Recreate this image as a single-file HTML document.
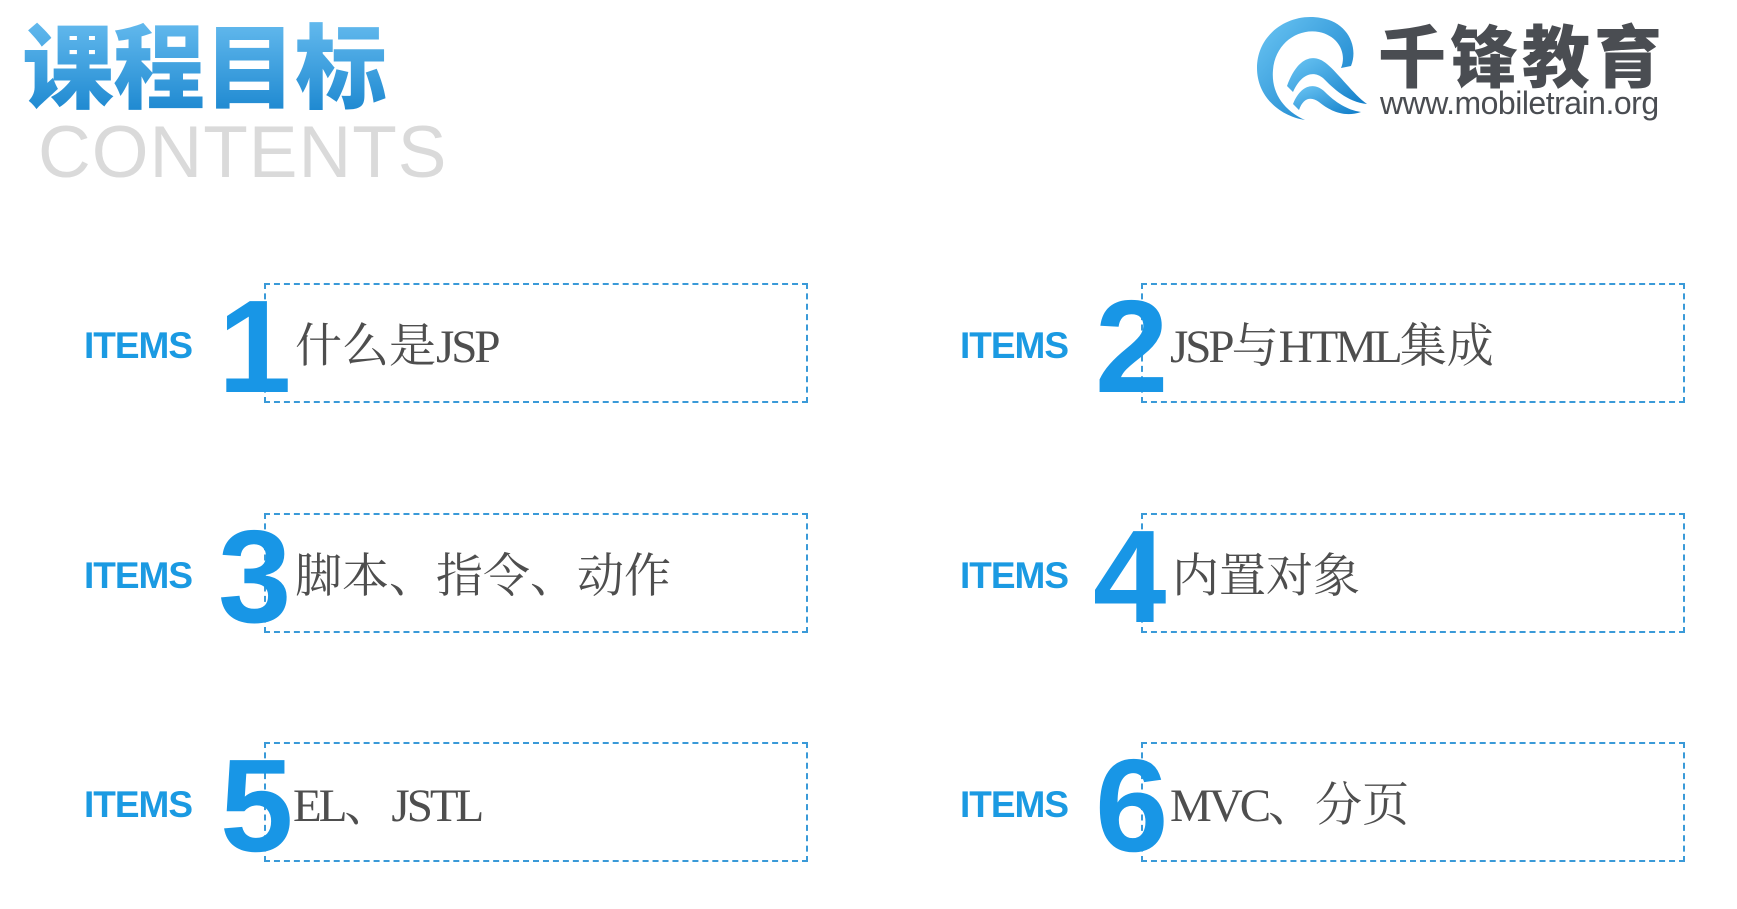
<!DOCTYPE html>
<html><head><meta charset="utf-8"><style>
body{margin:0;width:1737px;height:909px;background:#fff;position:relative;overflow:hidden;font-family:"Liberation Sans","Noto Sans CJK SC",sans-serif}
.a{position:absolute;white-space:nowrap}
.title{left:22px;top:7px;font-size:92px;font-weight:900;line-height:110px;letter-spacing:-1px;background:linear-gradient(#6ec1f2,#1a86cf);-webkit-background-clip:text;color:transparent;font-family:"Noto Sans CJK SC",sans-serif}
.cont{left:38px;top:116px;font-size:73px;color:#dadada;line-height:73px;letter-spacing:1px}
.box{position:absolute;border:2px dashed #3a9ad8;width:540px;height:116px}
.items{position:absolute;font-size:37px;font-weight:bold;color:#1b9ae2;letter-spacing:-1px}
.num{position:absolute;font-size:132px;font-weight:bold;color:#1896e6;line-height:110px;letter-spacing:-4px}
.txt{position:absolute;font-size:47px;color:#4e4e4e;font-family:"Liberation Serif","Noto Serif CJK SC",serif;line-height:60px}
.n{letter-spacing:-3px}
</style></head><body>
<div class="a title">课程目标</div>
<div class="a cont">CONTENTS</div>

<svg class="a" style="left:1243px;top:6px" width="130" height="120" viewBox="0 0 130 120">
<defs><linearGradient id="g" x1="0" y1="0" x2="1" y2="1"><stop offset="0" stop-color="#6cc6f4"/><stop offset="1" stop-color="#0f7cc8"/></linearGradient></defs>
<path d="M108 60 C116 40 104 16 78 12 C46 6 14 28 14 62 C14 90 36 110 62 114 C40 104 28 86 30 64 C32 38 54 22 76 26 C96 30 104 48 98 62 Z" fill="url(#g)"/>
<path d="M44 80 C54 52 70 46 84 58 C96 68 110 88 124 98 C104 96 90 82 80 72 C70 64 58 68 50 86 Z" fill="url(#g)"/>
<path d="M50 98 C58 78 72 76 82 86 C92 96 104 104 118 106 C100 112 86 104 76 96 C68 90 60 92 56 104 Z" fill="url(#g)"/>
</svg>
<div class="a" style="left:1378px;top:13px;font-size:68px;font-weight:900;color:#4a4d52;font-family:'Noto Sans CJK SC',sans-serif;line-height:80px;letter-spacing:4px">千锋教育</div>
<div class="a" style="left:1380px;top:86px;font-size:32px;color:#4a4d52;line-height:34px;letter-spacing:-0.5px">www.mobiletrain.org</div>

<div class="box" style="left:264px;top:283px"></div>
<div class="box" style="left:1141px;top:283px"></div>
<div class="box" style="left:264px;top:513px"></div>
<div class="box" style="left:1141px;top:513px"></div>
<div class="box" style="left:264px;top:742px"></div>
<div class="box" style="left:1141px;top:742px"></div>

<div class="items" style="left:84px;top:325px">ITEMS</div>
<div class="items" style="left:960px;top:325px">ITEMS</div>
<div class="items" style="left:84px;top:555px">ITEMS</div>
<div class="items" style="left:960px;top:555px">ITEMS</div>
<div class="items" style="left:84px;top:784px">ITEMS</div>
<div class="items" style="left:960px;top:784px">ITEMS</div>

<div class="num" style="left:218px;top:292px">1</div>
<div class="num" style="left:1095px;top:292px">2</div>
<div class="num" style="left:218px;top:522px">3</div>
<div class="num" style="left:1093px;top:522px">4</div>
<div class="num" style="left:220px;top:751px">5</div>
<div class="num" style="left:1095px;top:751px">6</div>

<div class="txt" style="left:295px;top:317px">什么是<span class="n">JSP</span></div>
<div class="txt" style="left:1170px;top:317px"><span class="n">JSP</span>与<span class="n">HTML</span>集成</div>
<div class="txt" style="left:295px;top:547px">脚本、指令、动作</div>
<div class="txt" style="left:1172px;top:547px">内置对象</div>
<div class="txt" style="left:293px;top:776px"><span class="n">EL</span>、<span class="n">JSTL</span></div>
<div class="txt" style="left:1170px;top:776px"><span class="n">MVC</span>、分页</div>
</body></html>
